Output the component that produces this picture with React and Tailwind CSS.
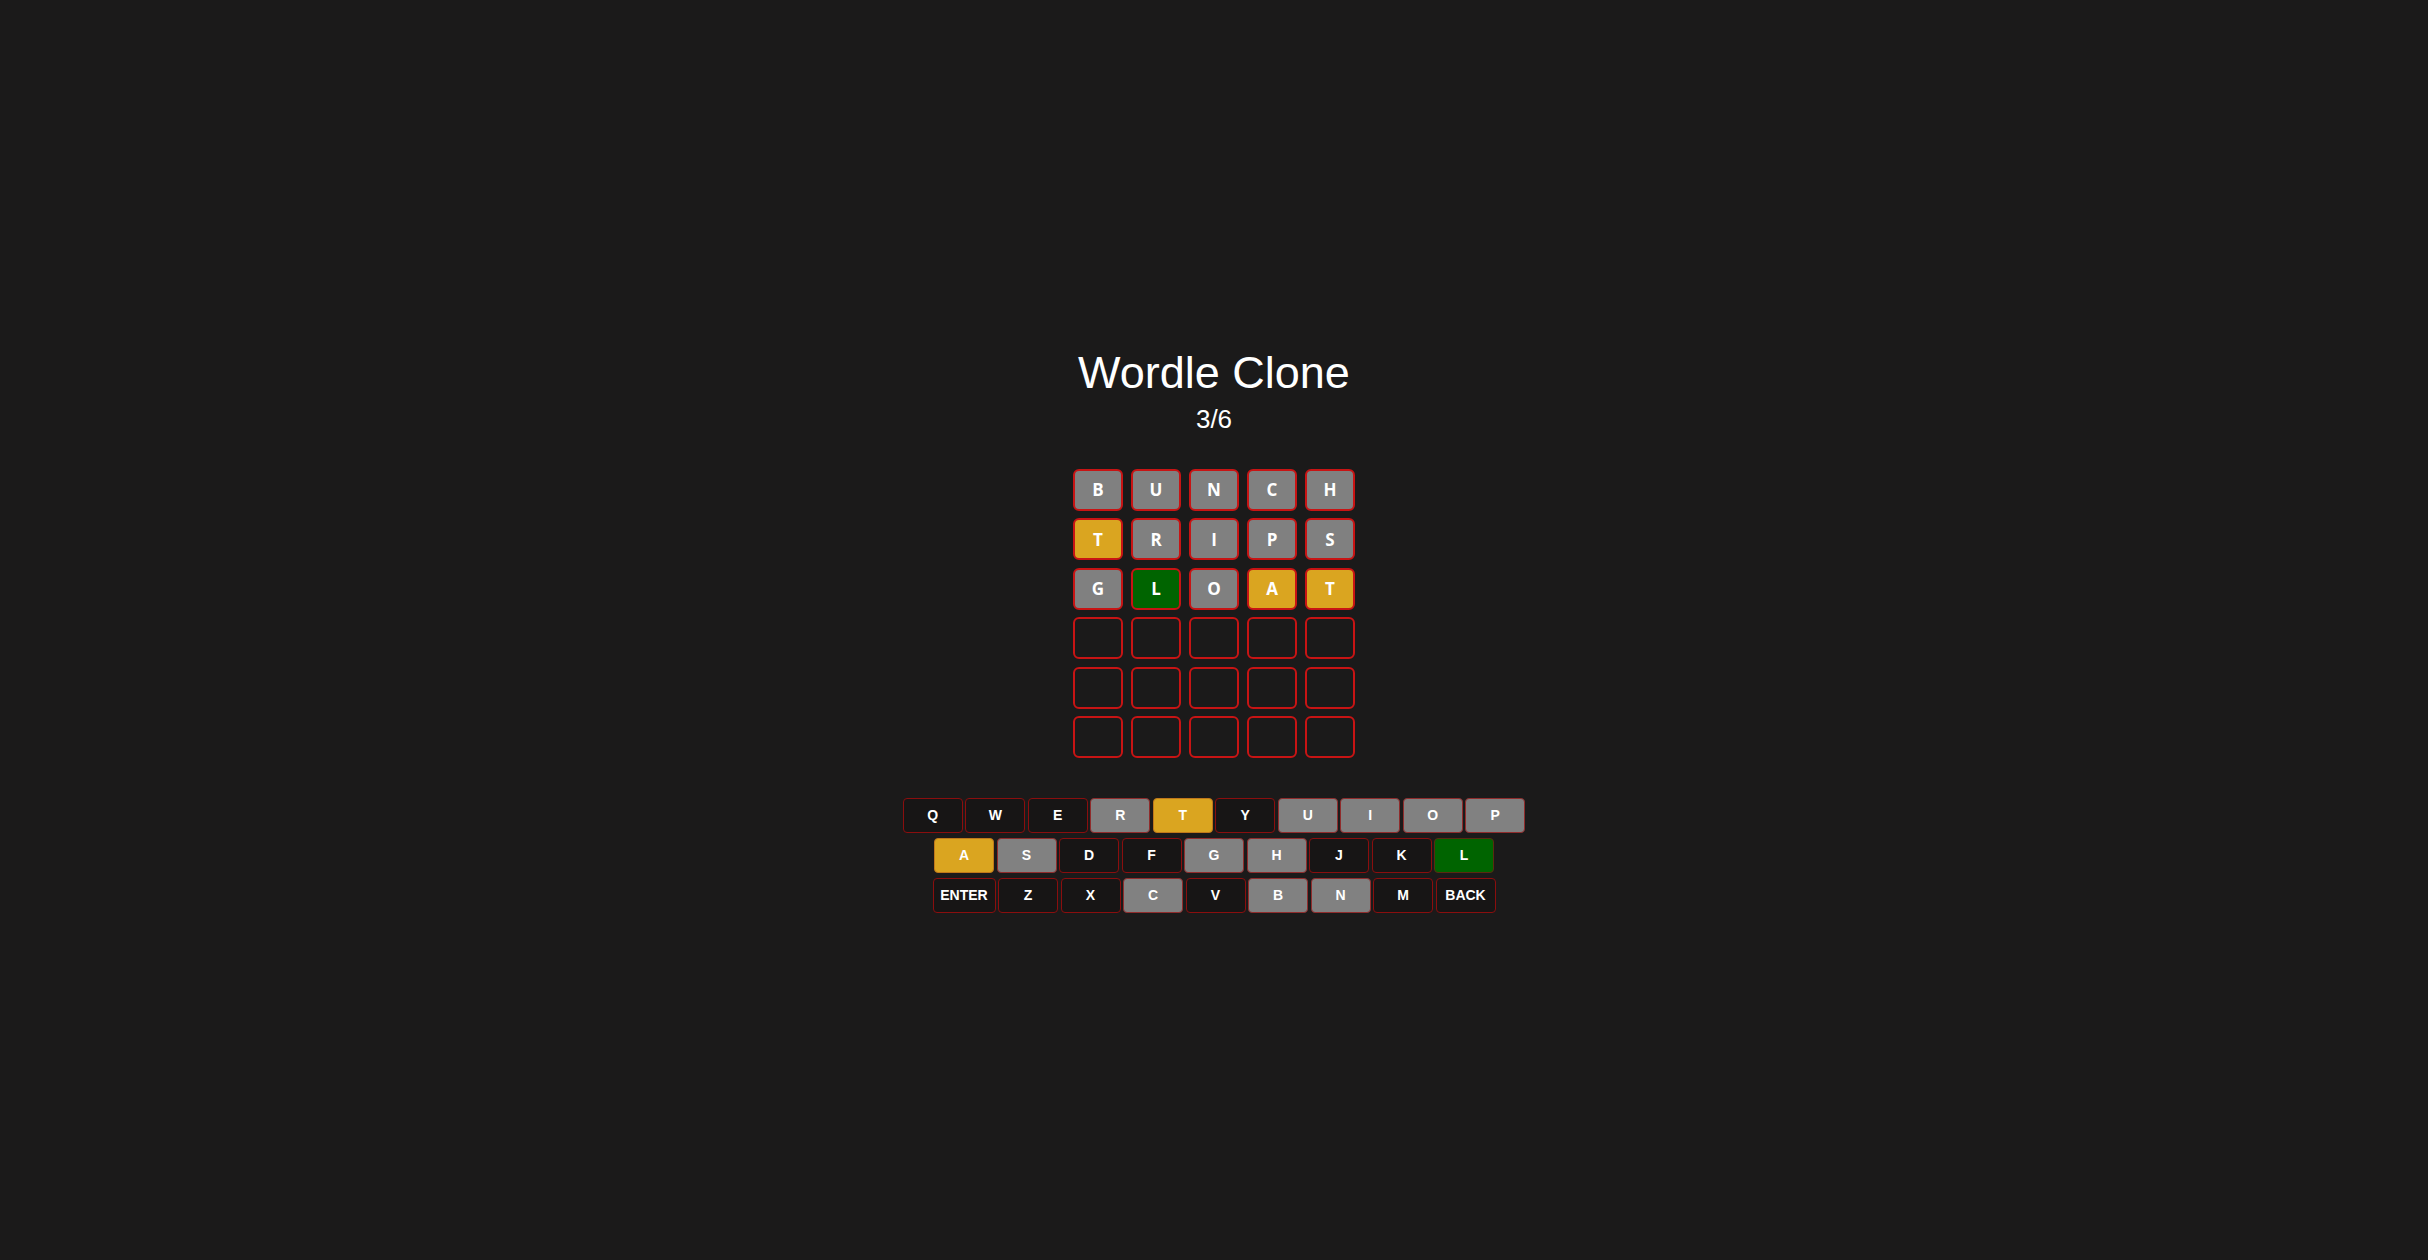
import React from "react";

const guesses = [
  [["B", "g"], ["U", "g"], ["N", "g"], ["C", "g"], ["H", "g"]],
  [["T", "y"], ["R", "g"], ["I", "g"], ["P", "g"], ["S", "g"]],
  [["G", "g"], ["L", "c"], ["O", "g"], ["A", "y"], ["T", "y"]],
];

const keyRows = [
  [["Q"], ["W"], ["E"], ["R", "g"], ["T", "y"], ["Y"], ["U", "g"], ["I", "g"], ["O", "g"], ["P", "g"]],
  [["A", "y"], ["S", "g"], ["D"], ["F"], ["G", "g"], ["H", "g"], ["J"], ["K"], ["L", "c"]],
  [["ENTER"], ["Z"], ["X"], ["C", "g"], ["V"], ["B", "g"], ["N", "g"], ["M"], ["BACK"]],
];

const tileColor = {
  g: "bg-[#808080]",
  y: "bg-[#daa520]",
  c: "bg-[#006400]",
};

const keyColor = {
  g: "bg-[#818181] border-[#902c2c]",
  y: "bg-[#daa520] border-[#c0781a]",
  c: "bg-[#006400] border-[#5a2a10]",
};

const Tile = ({ letter, state }) => (
  <div
    className={`w-[50px] h-[42px] rounded-[6px] border-2 border-[#c81414] flex items-center justify-center text-white font-bold text-[17px] ${
      state ? tileColor[state] : "bg-transparent"
    }`}
    style={{ fontFamily: '"Open Sans", sans-serif' }}
  >
    {letter}
  </div>
);

const Key = ({ label, state }) => (
  <button
    className={`h-[35px] ${label === "ENTER" ? "w-[63px]" : "w-[60px]"} rounded-[4px] border-[1.5px] flex items-center justify-center text-white font-bold text-[14px] ${
      state ? keyColor[state] : "bg-[#171515] border-[#8a0e0e]"
    }`}
  >
    {label}
  </button>
);

export default function App() {
  const rows = [...guesses];
  while (rows.length < 6) rows.push([[""], [""], [""], [""], [""]]);

  return (
    <div
      className="min-h-screen bg-[#1b1a1a] flex flex-col items-center justify-center text-white"
      style={{ fontFamily: '"Liberation Sans", Arial, sans-serif' }}
    >
      <h1 className="text-[45px] leading-[52px] font-normal">Wordle Clone</h1>
      <div className="text-[26px] leading-[30px] mt-[5px]">3/6</div>

      <div className="grid grid-cols-5 gap-x-[8px] gap-y-[7.5px] mt-[35px]">
        {rows.map((row, r) =>
          row.map(([letter, state], c) => (
            <Tile key={`${r}-${c}`} letter={letter} state={state} />
          ))
        )}
      </div>

      <div className="flex flex-col items-center gap-[5px] mt-[40px]">
        {keyRows.map((row, r) => (
          <div key={r} className="flex gap-[2.5px]">
            {row.map(([label, state]) => (
              <Key key={label} label={label} state={state} />
            ))}
          </div>
        ))}
      </div>
    </div>
  );
}
